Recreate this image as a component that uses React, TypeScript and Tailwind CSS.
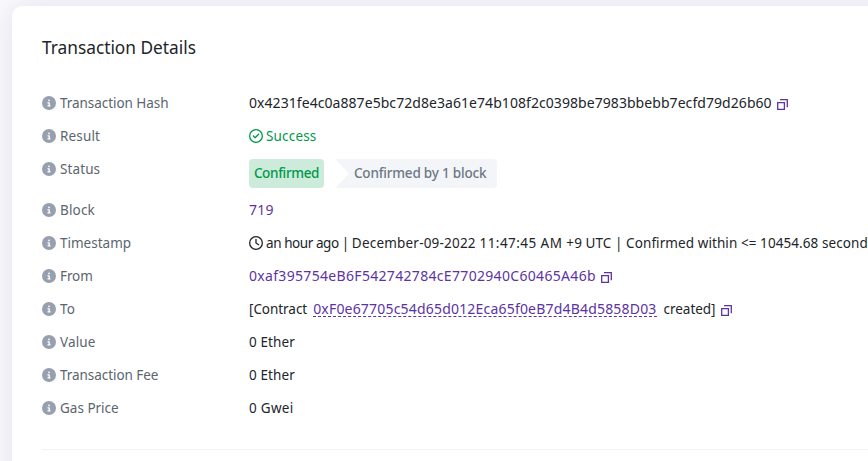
import type { ReactNode } from 'react';
import { FaCircleInfo, FaRegCircleCheck, FaRegClock } from 'react-icons/fa6';

function CopyIcon({ className }: { className: string }) {
  return (
    <svg viewBox="0 0 11 11" className={`mt-px h-[11px] w-[11px] shrink-0 text-[#5c34a2] ${className}`} fill="none" stroke="currentColor" strokeWidth="1.3">
      <path d="M.7 3.6h6.7v6.7H.7z" />
      <path d="M3 .7h7.3v7.6" />
    </svg>
  );
}

function Row({ label, tracking = '', children }: { label: string; tracking?: string; children: ReactNode }) {
  return (
    <div className="mb-3 flex items-start">
      <dt className="flex h-[21px] w-[207px] shrink-0 items-center gap-[4px] text-[#5b656e]">
        <FaCircleInfo className="mb-px h-3.5 w-3.5 shrink-0 text-[#989fae]" />
        <span className={tracking}>{label}</span>
      </dt>
      <dd className="flex min-h-[21px] items-center whitespace-nowrap">{children}</dd>
    </div>
  );
}

export default function App() {
  return (
    <div className="h-[461px] w-[868px] overflow-hidden bg-[#fbfafc] pt-1.5 pl-3 font-['Noto_Sans','Open_Sans',sans-serif] text-[13.5px] leading-[21px] text-[#212529]">
      <section className="h-[600px] w-[1100px] rounded-[10px] bg-white px-[30px] pt-[30px] shadow-[0_0_30px_0_rgba(202,199,226,0.5)]">
        <h1 className="mb-[33px] h-6 text-[17.3px] leading-6">Transaction Details</h1>
        <dl>
          <Row label="Transaction Hash" tracking="tracking-[-0.05px]">
            <span className="h-[21px] text-[14px] leading-[19px] tracking-[0.06px]">0x4231fe4c0a887e5bc72d8e3a61e74b108f2c0398be7983bbebb7ecfd79d26b60</span>
            <CopyIcon className="ml-[5px]" />
          </Row>
          <Row label="Result" tracking="tracking-[0.15px]">
            <span className="flex items-center gap-[3px] text-[#00994a]">
              <FaRegCircleCheck className="mb-px h-3.5 w-3.5" />
              <span className="tracking-[0.17px]">Success</span>
            </span>
          </Row>
          <Row label="Status" tracking="tracking-[0.1px]">
            <span className="flex h-[29px] w-[75px] items-center justify-center rounded-[4px] bg-[#ccebdb] font-medium tracking-[-0.35px] text-[#00994a]">Confirmed</span>
            <span className="ml-[11px] flex h-[29px] w-[162px] items-center rounded-r-[4px] bg-[#f3f5f9] pl-[19px] font-medium tracking-[-0.2px] text-[#6c7884] [clip-path:polygon(0_0,100%_0,100%_100%,0_100%,14px_50%)]">
              Confirmed by 1 block
            </span>
          </Row>
          <Row label="Block" tracking="tracking-[0.15px]">
            <a className="h-[21px] text-[14px] leading-[19px] tracking-[0.3px] text-[#5c34a2]">719</a>
          </Row>
          <Row label="Timestamp">
            <FaRegClock className="mr-[3px] mb-px h-3.5 w-3.5 shrink-0" />
            <span className="whitespace-pre">
              <span className="tracking-[-0.43px]">{'an hour ago | '}</span>
              <span className="tracking-[0.2px]">{'December-09-2022 '}</span>
              <span className="tracking-[0.45px]">{'11:47:45 AM '}</span>
              <span className="tracking-[0.08px]">{'+9 UTC | Confirmed within <= 10454.68 second'}</span>
            </span>
          </Row>
          <Row label="From" tracking="tracking-[-0.1px]">
            <a className="h-[21px] text-[14px] leading-[19px] tracking-[0.32px] text-[#5c34a2]">0xaf395754eB6F542742784cE7702940C60465A46b</a>
            <CopyIcon className="ml-[5px]" />
          </Row>
          <Row label="To" tracking="tracking-[0.2px]">
            <span className="tracking-[-0.05px]">[Contract</span>
            <a className="ml-[6px] h-[15px] border-b border-dashed border-[#5c34a2] text-[14px] leading-[13px] tracking-[0.19px] text-[#5c34a2]">0xF0e67705c54d65d012Eca65f0eB7d4B4d5858D03</a>
            <span className="ml-[7px] tracking-[-0.03px]">created]</span>
            <CopyIcon className="ml-[5px]" />
          </Row>
          <Row label="Value" tracking="tracking-[0.15px]">
            <span className="tracking-[0.1px]">0 Ether</span>
          </Row>
          <Row label="Transaction Fee" tracking="tracking-[-0.05px]">
            <span className="tracking-[0.1px]">0 Ether</span>
          </Row>
          <Row label="Gas Price">
            <span className="tracking-[0.28px]">0 Gwei</span>
          </Row>
        </dl>
        <hr className="mt-[30px] border-[#f2f2f4]" />
      </section>
    </div>
  );
}
